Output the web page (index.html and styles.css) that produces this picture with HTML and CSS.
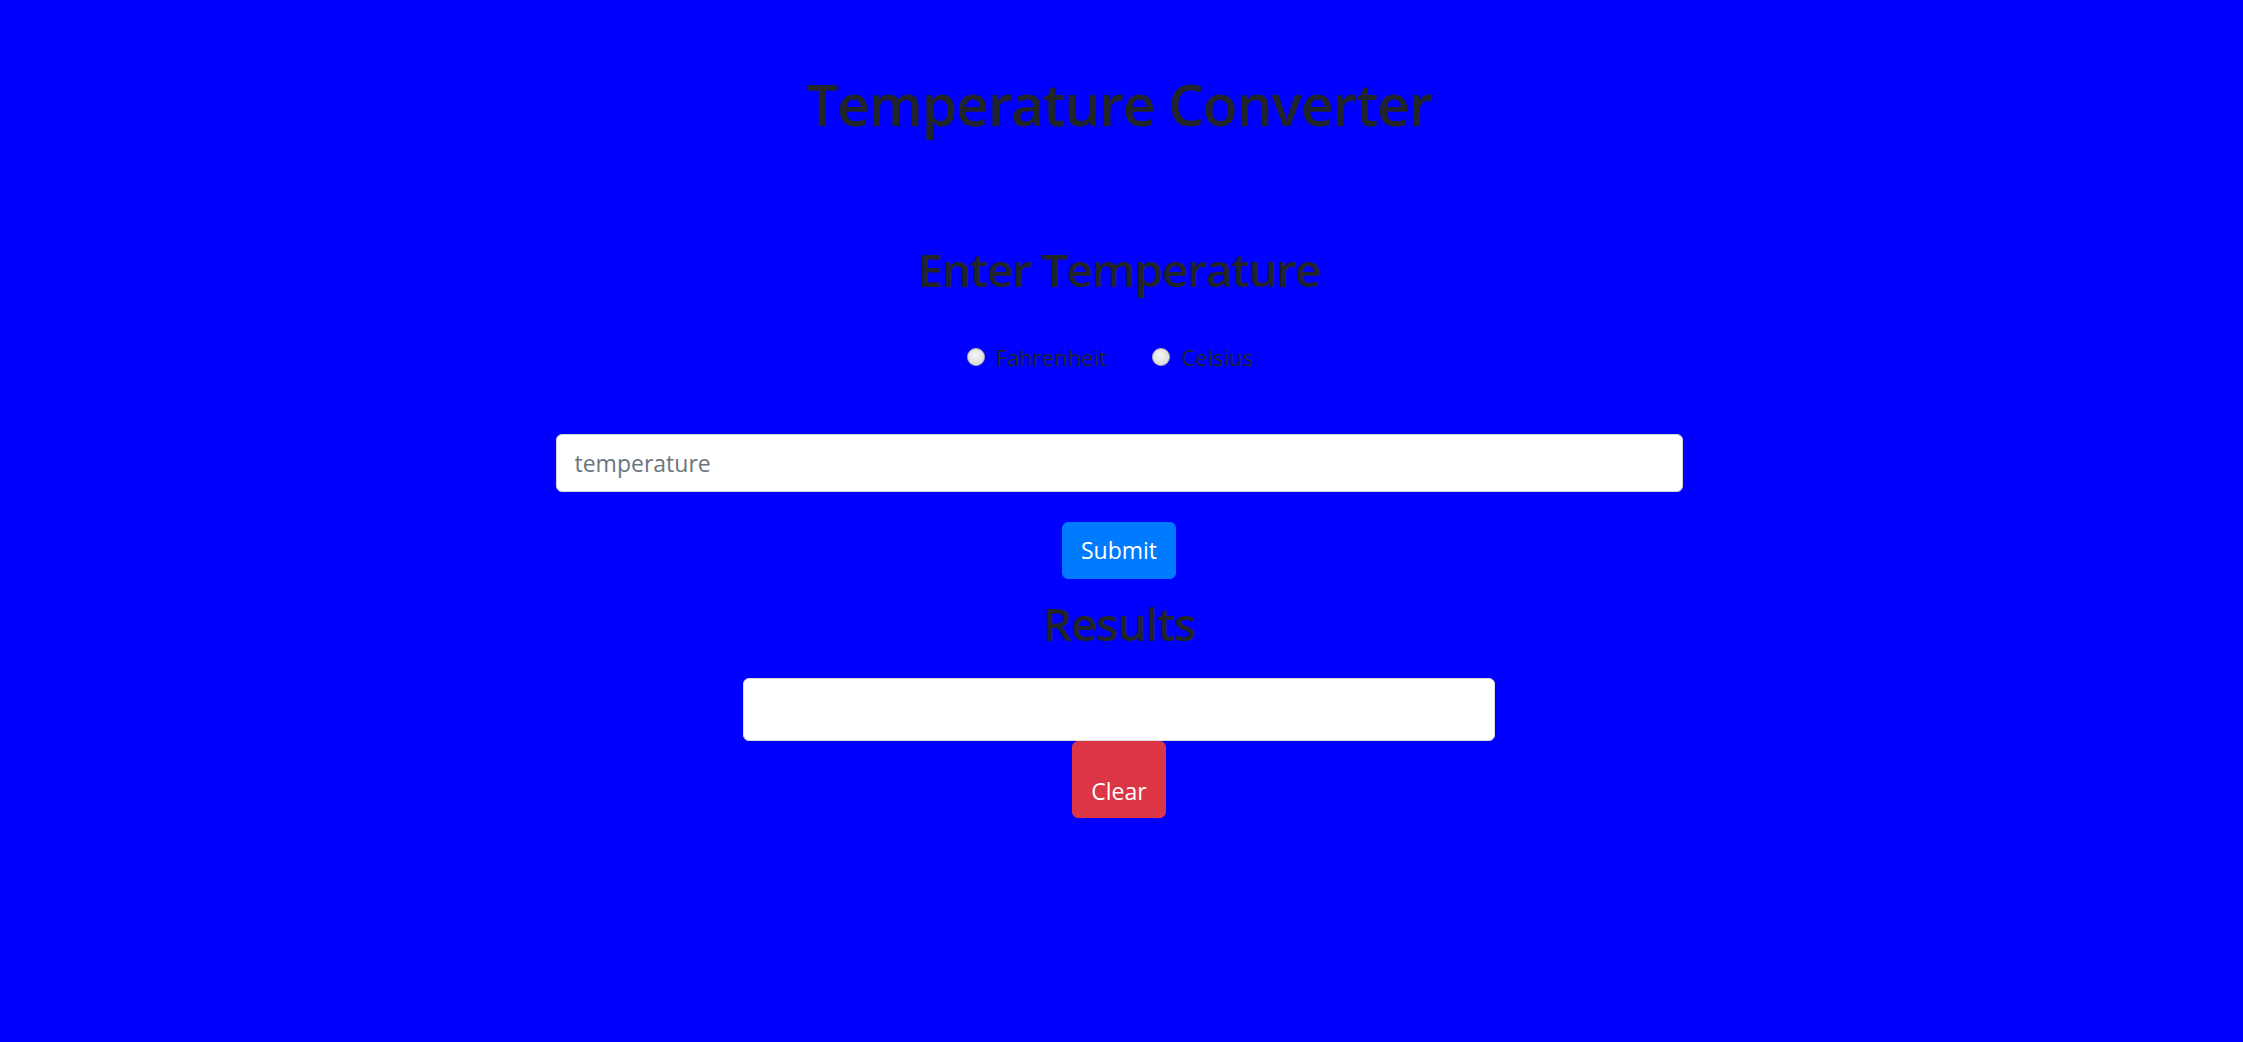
FILE: index.html
```html
<!DOCTYPE html>
<html lang="en">
<head>
<meta charset="utf-8">
<title>Temperature Converter</title>
<link rel="stylesheet" href="styles.css">
</head>
<body>
<main class="page">
  <h1 class="title">Temperature Converter</h1>
  <h2 class="heading enter-heading">Enter Temperature</h2>
  <div class="units">
    <label class="unit"><input type="radio" name="unit" class="radio"><span>Fahrenheit</span></label>
    <label class="unit"><input type="radio" name="unit" class="radio"><span>Celsius</span></label>
  </div>
  <input class="temp-input" type="text" placeholder="temperature">
  <button class="btn btn-submit" type="button">Submit</button>
  <h2 class="heading results-heading">Results</h2>
  <div class="result-box"></div>
  <button class="btn btn-clear" type="button">Clear</button>
</main>
</body>
</html>
```

FILE: styles.css
```css
html, body {
  margin: 0;
  padding: 0;
}
body {
  background: #0000ff;
  color: #212529;
  font-family: "Open Sans", "Noto Sans", sans-serif;
  font-size: 23px;
  line-height: 1.5;
}
.page {
  display: flex;
  flex-direction: column;
  align-items: center;
  padding-right: 5px;
  min-height: 1042px;
  box-sizing: border-box;
}
.title {
  font-size: 57px;
  font-weight: 600;
  letter-spacing: -1.2px;
  line-height: 1.2;
  margin: 70px 0 0;
}
.heading {
  font-size: 46px;
  font-weight: 600;
  letter-spacing: -1.2px;
  line-height: 1.2;
  margin: 0;
}
.enter-heading {
  margin-top: 104px;
}
.units {
  display: flex;
  gap: 12px;
  margin-top: 42px;
  font-size: 22px;
  line-height: 34.5px;
}
.unit {
  display: flex;
  align-items: center;
  gap: 11px;
  padding: 0 26px 0 7.5px;
}
.radio {
  appearance: none;
  -webkit-appearance: none;
  width: 18px;
  height: 18px;
  margin: 0;
  border-radius: 50%;
  border: 1px solid #b5b5b5;
  background: radial-gradient(circle at 45% 40%, #f6f6f6 0%, #e2e2e2 55%, #cfcfcf 100%);
  box-sizing: border-box;
}
.temp-input {
  margin-top: 60px;
  width: 1127px;
  height: 58px;
  box-sizing: border-box;
  padding: 0 18px;
  border: 1.5px solid #ced4da;
  border-radius: 6px;
  background: #fff;
  font-family: inherit;
  font-size: 23px;
  color: #495057;
  outline: none;
}
.temp-input::placeholder {
  color: #6c757d;
}
.btn {
  font-family: inherit;
  font-size: 23px;
  line-height: 34.5px;
  color: #fff;
  border: 1.5px solid transparent;
  border-radius: 6px;
  cursor: pointer;
}
.btn-submit {
  margin-top: 30px;
  height: 57px;
  padding: 0 18px;
  background: #007bff;
  border-color: #007bff;
}
.results-heading {
  margin-top: 17px;
}
.result-box {
  margin-top: 27px;
  width: 752px;
  height: 63px;
  box-sizing: border-box;
  background: #fff;
  border: 1.5px solid #dcdcdc;
  border-radius: 6px;
}
.btn-clear {
  padding: 32px 18px 8px;
  background: #dc3545;
  border-color: #dc3545;
}
```
